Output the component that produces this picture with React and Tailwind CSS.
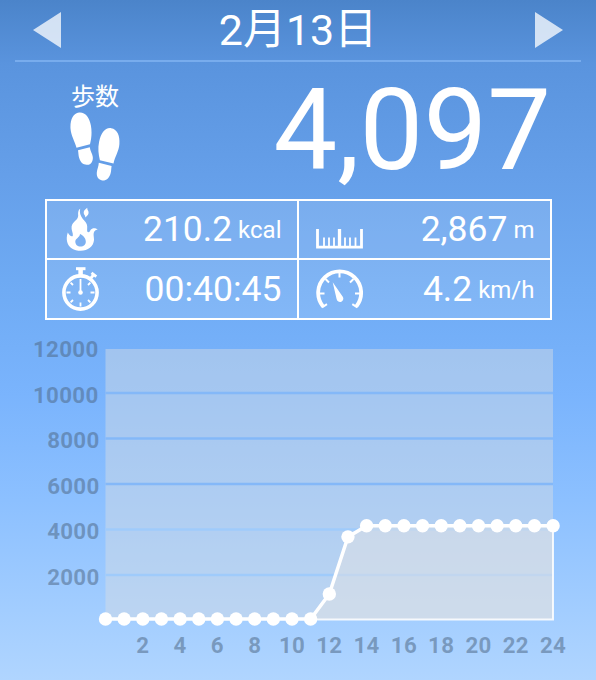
import React from 'react';

const STEPS = [0, 0, 0, 0, 0, 0, 0, 0, 0, 0, 0, 0, 1100, 3610, 4097, 4097, 4097, 4097, 4097, 4097, 4097, 4097, 4097, 4097, 4097];
const Y_TICKS = [12000, 10000, 8000, 6000, 4000, 2000];
const X_TICKS = [2, 4, 6, 8, 10, 12, 14, 16, 18, 20, 22, 24];

const xPos = (hour) => 105.5 + hour * 18.65;
const yPos = (steps) => 285 - steps * 0.02275;

function Footprints() {
  return (
    <svg width="50" height="70" viewBox="0 0 50 70" fill="#fff">
      <path d="M9 .5C15 -.2 19.500 5 20.900 13.500c1.200 6.500 .6 12.500-.9 18.800L6.500 35.700C5 29.500 1 24 .5 16.500C0 8 3 1.200 9 .5Z" />
      <path d="M8 38.200l11.800-3c.3 3.600 2.600 6.300 3 9.700c.4 4.300-1.800 7.600-5.300 7.900c-4.200.4-7-2.400-8.300-6.700c-.8-2.700-.7-5.200-1.200-7.900Z" />
      <path d="M41.200 16.200c6 .9 8.800 7.300 8.200 15.800c-.5 7.400-4.500 12.500-5.900 19.500L29.900 48.200c-1.400-6-2.200-12-.8-18.500c1.900-8.500 6-14.400 12.100-13.500Z" />
      <path d="M28.800 50.800l12.800 3.200c-.5 2.600-.2 5-1.100 7.700c-1.400 4.400-4.200 7.200-8.300 6.800c-3.600-.4-5.800-3.700-5.400-7.900c.3-3.500 1.900-6.200 2-9.800Z" />
    </svg>
  );
}

function FlameIcon() {
  return (
    <svg width="32" height="44" viewBox="0 0 32 44" fill="#fff" className="ml-[3px]">
      <path
        fillRule="evenodd"
        d="M14.200 1.500C11.900 3.500 12 6 12.200 8.500C12.300 13 6.500 14.500 5.600 19.500C5 23 7.400 26 6.800 29C5.500 30 3.200 28.500 1.800 25.500C.6 29 .5 32 1.200 35C2.500 40.500 8 43.800 14.700 43.800C22 43.800 27.500 39.500 28 33C28.200 30 26.700 26.800 28.500 24.300C29.400 23.200 30.600 22.800 31.700 22.800C29.500 20.800 26.300 20.900 24.500 23C23.800 24.600 23 25.500 22 25.200C20.600 24.800 21.300 22.500 21.200 19.500C21 15.500 18.500 14.200 16.500 11.500C14.500 8.700 13.200 5.500 14.200 1.500ZM14 27C17 28.300 19.800 31.200 19.800 34.500C19.800 37.700 17.600 39.500 14.600 39.500C11.400 39.500 9.300 37.500 9.300 34.500C9.300 31.500 13.800 30.500 14 27Z"
      />
      <path d="M21.300 .8C18.500 2.800 17.300 4.300 17.800 6.500C18.100 7.800 19.500 8.500 19.300 10.500C21.700 8.500 23 7 22.500 4.800C22.200 3.500 21 2.800 21.300 .8Z" />
    </svg>
  );
}

function StopwatchIcon() {
  return (
    <svg width="40" height="46" viewBox="0 0 40 46" fill="none" stroke="#fff">
      <circle cx="19.500" cy="26.500" r="16.600" strokeWidth="3.600" />
      <path d="M15 2.700h9.500" strokeWidth="3" />
      <path d="M19.600 3v6" strokeWidth="4.500" />
      <path d="M29.500 12.500l3-3.500M30.500 6.800l4.800 3.800" strokeWidth="2.800" />
      <path
        strokeWidth="1.800"
        d="M19.500 36.500v4M5.500 26.500h4M29.500 26.500h4M9.600 16.600l2.400 2.400M29.400 16.600l-2.400 2.400M9.600 36.400l2.400-2.400M29.400 36.400l-2.400-2.400"
      />
      <path d="M19.500 13v13" strokeWidth="1.800" />
      <circle cx="19.500" cy="26.500" r="2.300" fill="#fff" stroke="none" />
    </svg>
  );
}

function RulerIcon() {
  return (
    <svg width="47" height="20" viewBox="0 0 47 20" fill="none" stroke="#fff" className="mt-[19px]">
      <path d="M1.500 0v18.200H45.500V0" strokeWidth="2.800" />
      <path d="M23.500 0v18" strokeWidth="3.300" />
      <path d="M8 8.500v9M13 8.500v9M18 8.500v9M29 8.500v9M34 8.500v9M39.500 8.500v9" strokeWidth="1.800" />
    </svg>
  );
}

function GaugeIcon() {
  return (
    <svg width="48" height="40" viewBox="0 0 48 40" fill="none" stroke="#fff">
      <path d="M7 37.500A21.500 21.500 0 1 1 40.300 37.500" strokeWidth="3.800" />
      <path
        strokeWidth="2"
        d="M23.500 3v5.500M9.500 10l3.500 3.500M37.500 10L34 13.500M3 24.500h5.500M44.500 24.500H39M6 38.300l5-3.200M41.300 38.300l-5-3.200"
      />
      <path d="M16.700 13.200l9.900 14.200a3.400 3.400 0 1 1-6 2.700Z" fill="#fff" stroke="none" />
    </svg>
  );
}

function Stat({ icon, value, unit, className }) {
  return (
    <div className={`flex items-center pr-[15px] ${className}`}>
      <div className="flex w-[52px] shrink-0 justify-center">{icon}</div>
      <div className="flex-1 text-right text-[35.5px] leading-[56px] whitespace-nowrap">
        {value}
        {unit && <span className="ml-[6px] align-[3px] text-[24px] leading-none">{unit}</span>}
      </div>
    </div>
  );
}

function StepChart() {
  const points = STEPS.map((s, i) => `${xPos(i)},${yPos(s)}`).join(' ');

  return (
    <svg width="596" height="346" viewBox="0 0 596 346" className="block">
      <rect x="105.500" y="15" width="447.500" height="271" fill="#dadee2" fillOpacity="0.45" />
      {Y_TICKS.slice(1).map((tick) => (
        <path key={tick} d={`M105.500 ${286.5 - tick * 0.02275}H553`} stroke={tick > 4000 ? '#84b8f8' : '#9fcbfb'} strokeWidth="2.600" />
      ))}
      <polygon points={`${xPos(11)},285.500 ${points} ${xPos(24)},285.500`} fill="#dce0e6" fillOpacity="0.55" />
      <path d={`M${xPos(11)} 285.500H553V192`} fill="none" stroke="#fff" strokeOpacity="0.85" strokeWidth="2" />
      <polyline points={points} fill="none" stroke="#fff" strokeWidth="3.500" />
      {STEPS.map((s, i) => (
        <circle key={i} cx={xPos(i)} cy={yPos(s)} r="6.700" fill="#fff" />
      ))}
      <g fill="#4e6885" fillOpacity="0.53" fontSize="22.3" fontWeight="700" letterSpacing="0.3">
        {Y_TICKS.map((tick) => (
          <text key={tick} x={tick >= 10000 ? 98.5 : 99.5} y={296.3 - tick * 0.02275} textAnchor="end">{tick}</text>
        ))}
        {X_TICKS.map((tick) => (
          <text key={tick} x={xPos(tick)} y="319" textAnchor="middle">{tick}</text>
        ))}
      </g>
    </svg>
  );
}

export default function App() {
  return (
    <div className="flex h-[680px] w-[596px] flex-col overflow-hidden bg-[linear-gradient(180deg,#4b84ca_0px,#5a94de_65px,#659fe9_175px,#6fabf4_290px,#7ab4fd_395px,#8cc0ff_500px,#a2cdff_610px,#b0d5ff_680px)] font-['Roboto','Noto_Sans_CJK_JP',sans-serif] text-white">
      <header className="mx-[15px] flex h-[62px] shrink-0 items-center justify-between border-b-2 border-[#78aced] px-[18px]">
        <svg width="28" height="36" viewBox="0 0 28 36" fill="#fff" fillOpacity="0.75">
          <path d="M28 0V36L0 18Z" />
        </svg>
        <h1 className="text-[43px] leading-[60px] font-normal">
          2<span className="align-[1px] leading-none">月</span>13<span className="align-[1px] leading-none">日</span>
        </h1>
        <svg width="28" height="36" viewBox="0 0 28 36" fill="#fff" fillOpacity="0.75">
          <path d="M0 0V36L28 18Z" />
        </svg>
      </header>

      <section className="flex h-[137px] shrink-0 justify-between pr-[45px] pl-[70px]">
        <div className="flex flex-col items-center pt-[21px]">
          <span className="text-[24px] leading-[29px]">歩数</span>
          <Footprints />
        </div>
        <div className="pt-[2px] text-[113.5px] leading-[134px]">4,097</div>
      </section>

      <section className="ml-[44.5px] grid h-[121px] w-[507px] shrink-0 grid-cols-[252px_251px] grid-rows-2 border-2 border-white bg-white/12">
        <Stat className="border-r-2 border-b-2 border-white pl-[8px]" icon={<FlameIcon />} value="210.2" unit="kcal" />
        <Stat className="border-b-2 border-white pl-[15px]" icon={<RulerIcon />} value="2,867" unit="m" />
        <Stat className="border-r-2 border-white pl-[8px]" icon={<StopwatchIcon />} value="00:40:45" />
        <Stat className="pl-[15px]" icon={<GaugeIcon />} value="4.2" unit="km/h" />
      </section>

      <section className="mt-[14px]">
        <StepChart />
      </section>
    </div>
  );
}
